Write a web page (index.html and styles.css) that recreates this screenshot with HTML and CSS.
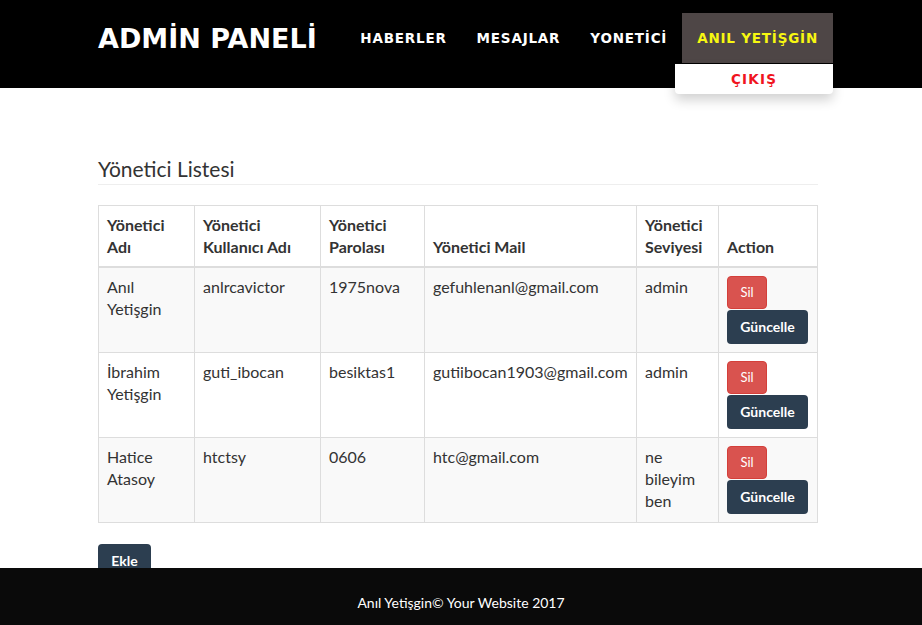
FILE: index.html
```html
<!DOCTYPE html>
<html lang="tr">
<head>
<meta charset="utf-8">
<title>Admin Paneli</title>
<link rel="stylesheet" href="styles.css">
</head>
<body>
<header class="navbar">
  <div class="nav-inner">
    <a class="brand" href="#">ADMİN PANELİ</a>
    <ul class="nav-menu">
      <li><a href="#">HABERLER</a></li>
      <li><a href="#">MESAJLAR</a></li>
      <li><a href="#">YONETİCİ</a></li>
      <li class="dropdown">
        <a class="active" href="#">ANIL YETİŞGİN</a>
        <div class="dropdown-menu"><a href="#">ÇIKIŞ</a></div>
      </li>
    </ul>
  </div>
</header>

<main class="content">
  <h2 class="page-title">Yönetici Listesi</h2>
  <table class="admin-table">
    <colgroup>
      <col class="c1"><col class="c2"><col class="c3"><col class="c4"><col class="c5"><col class="c6">
    </colgroup>
    <thead>
      <tr>
        <th>Yönetici Adı</th>
        <th>Yönetici Kullanıcı Adı</th>
        <th>Yönetici Parolası</th>
        <th>Yönetici Mail</th>
        <th>Yönetici Seviyesi</th>
        <th>Action</th>
      </tr>
    </thead>
    <tbody>
      <tr class="odd">
        <td>Anıl Yetişgin</td>
        <td>anlrcavictor</td>
        <td>1975nova</td>
        <td>gefuhlenanl@gmail.com</td>
        <td>admin</td>
        <td class="actions"><a class="btn btn-danger" href="#">Sil</a><a class="btn btn-dark" href="#">Güncelle</a></td>
      </tr>
      <tr>
        <td>İbrahim Yetişgin</td>
        <td>guti_ibocan</td>
        <td>besiktas1</td>
        <td>gutiibocan1903@gmail.com</td>
        <td>admin</td>
        <td class="actions"><a class="btn btn-danger" href="#">Sil</a><a class="btn btn-dark" href="#">Güncelle</a></td>
      </tr>
      <tr class="odd">
        <td>Hatice Atasoy</td>
        <td>htctsy</td>
        <td>0606</td>
        <td>htc@gmail.com</td>
        <td>ne bileyim ben</td>
        <td class="actions"><a class="btn btn-danger" href="#">Sil</a><a class="btn btn-dark" href="#">Güncelle</a></td>
      </tr>
    </tbody>
  </table>
  <a class="btn btn-dark btn-add" href="#">Ekle</a>
</main>

<footer class="footer">Anıl Yetişgin© Your Website 2017</footer>
</body>
</html>
```

FILE: styles.css
```css
* { box-sizing: border-box; }
html, body { margin: 0; padding: 0; }
body {
  font-family: Lato, "Open Sans", sans-serif;
  font-size: 16px;
  line-height: 22px;
  color: #333;
  background: #fff;
}
a { text-decoration: none; }

.navbar {
  background: #000;
  height: 88px;
}
.nav-inner {
  width: 720px;
  margin-left: 98px;
  height: 88px;
  display: flex;
  align-items: center;
  justify-content: space-between;
}
.brand {
  font-family: "DejaVu Sans", sans-serif;
  font-weight: bold;
  font-size: 27px;
  color: #fff;
  margin-top: -11px;
}
.nav-menu {
  list-style: none;
  margin: 13px -15px 0 0;
  padding: 0;
  display: flex;
  align-self: flex-start;
}
.nav-menu li { position: relative; }
.nav-menu li > a {
  display: block;
  height: 50px;
  line-height: 50px;
  padding: 0 15px;
  font-family: "DejaVu Sans", sans-serif;
  font-weight: bold;
  font-size: 13.5px;
  letter-spacing: 0.8px;
  color: #fff;
}
.nav-menu li > a.active {
  background: #4e4646;
  color: #f7f711;
}
.dropdown-menu {
  position: absolute;
  top: 51px;
  right: 0;
  width: 158px;
  height: 30px;
  background: #fff;
  border-radius: 0 0 4px 4px;
  box-shadow: 0 6px 12px rgba(0,0,0,0.18);
  text-align: center;
}
.dropdown-menu a {
  display: block;
  line-height: 30px;
  font-family: "DejaVu Sans", sans-serif;
  font-weight: bold;
  font-size: 13.5px;
  letter-spacing: 1.2px;
  color: #f0141e;
}

.content {
  width: 720px;
  margin-left: 98px;
  padding-top: 68px;
  padding-bottom: 80px;
}
.page-title {
  font-family: Lato, sans-serif;
  font-weight: 400;
  font-size: 21px;
  line-height: 26px;
  margin: 0 0 20px 0;
  padding-bottom: 2px;
  border-bottom: 1px solid #eee;
  color: #333;
}

.admin-table {
  width: 720px;
  border-collapse: collapse;
  table-layout: fixed;
  margin-bottom: 21px;
}
.c1 { width: 96px; }
.c2 { width: 126px; }
.c3 { width: 104px; }
.c4 { width: 212px; }
.c5 { width: 82px; }
.c6 { width: 99px; }
.admin-table th,
.admin-table td {
  border: 1px solid #ddd;
  padding: 8px;
  text-align: left;
  vertical-align: top;
}
.admin-table th {
  vertical-align: bottom;
  font-weight: bold;
  border-bottom: 2px solid #ddd;
}
.admin-table tr.odd td { background: #f9f9f9; }

.btn {
  display: inline-block;
  font-family: Lato, sans-serif;
  color: #fff;
  border-radius: 4px;
  text-align: center;
}
.btn-danger {
  background: #d9534f;
  border: 1px solid #d43f3a;
  font-size: 13px;
  width: 40px;
  height: 33px;
  line-height: 31px;
}
.btn-dark {
  background: #2c3e50;
  font-weight: bold;
  font-size: 14px;
}
.actions .btn-dark {
  display: block;
  width: 81px;
  height: 34px;
  line-height: 34px;
  margin-top: 1px;
}
.btn-add {
  width: 53px;
  height: 34px;
  line-height: 34px;
}

.footer {
  position: fixed;
  left: 0;
  right: 0;
  bottom: 0;
  height: 57px;
  background: #0a0a0a;
  color: #fff;
  font-family: Lato, sans-serif;
  font-size: 14px;
  text-align: center;
  line-height: 22px;
  padding-top: 24px;
}
```
